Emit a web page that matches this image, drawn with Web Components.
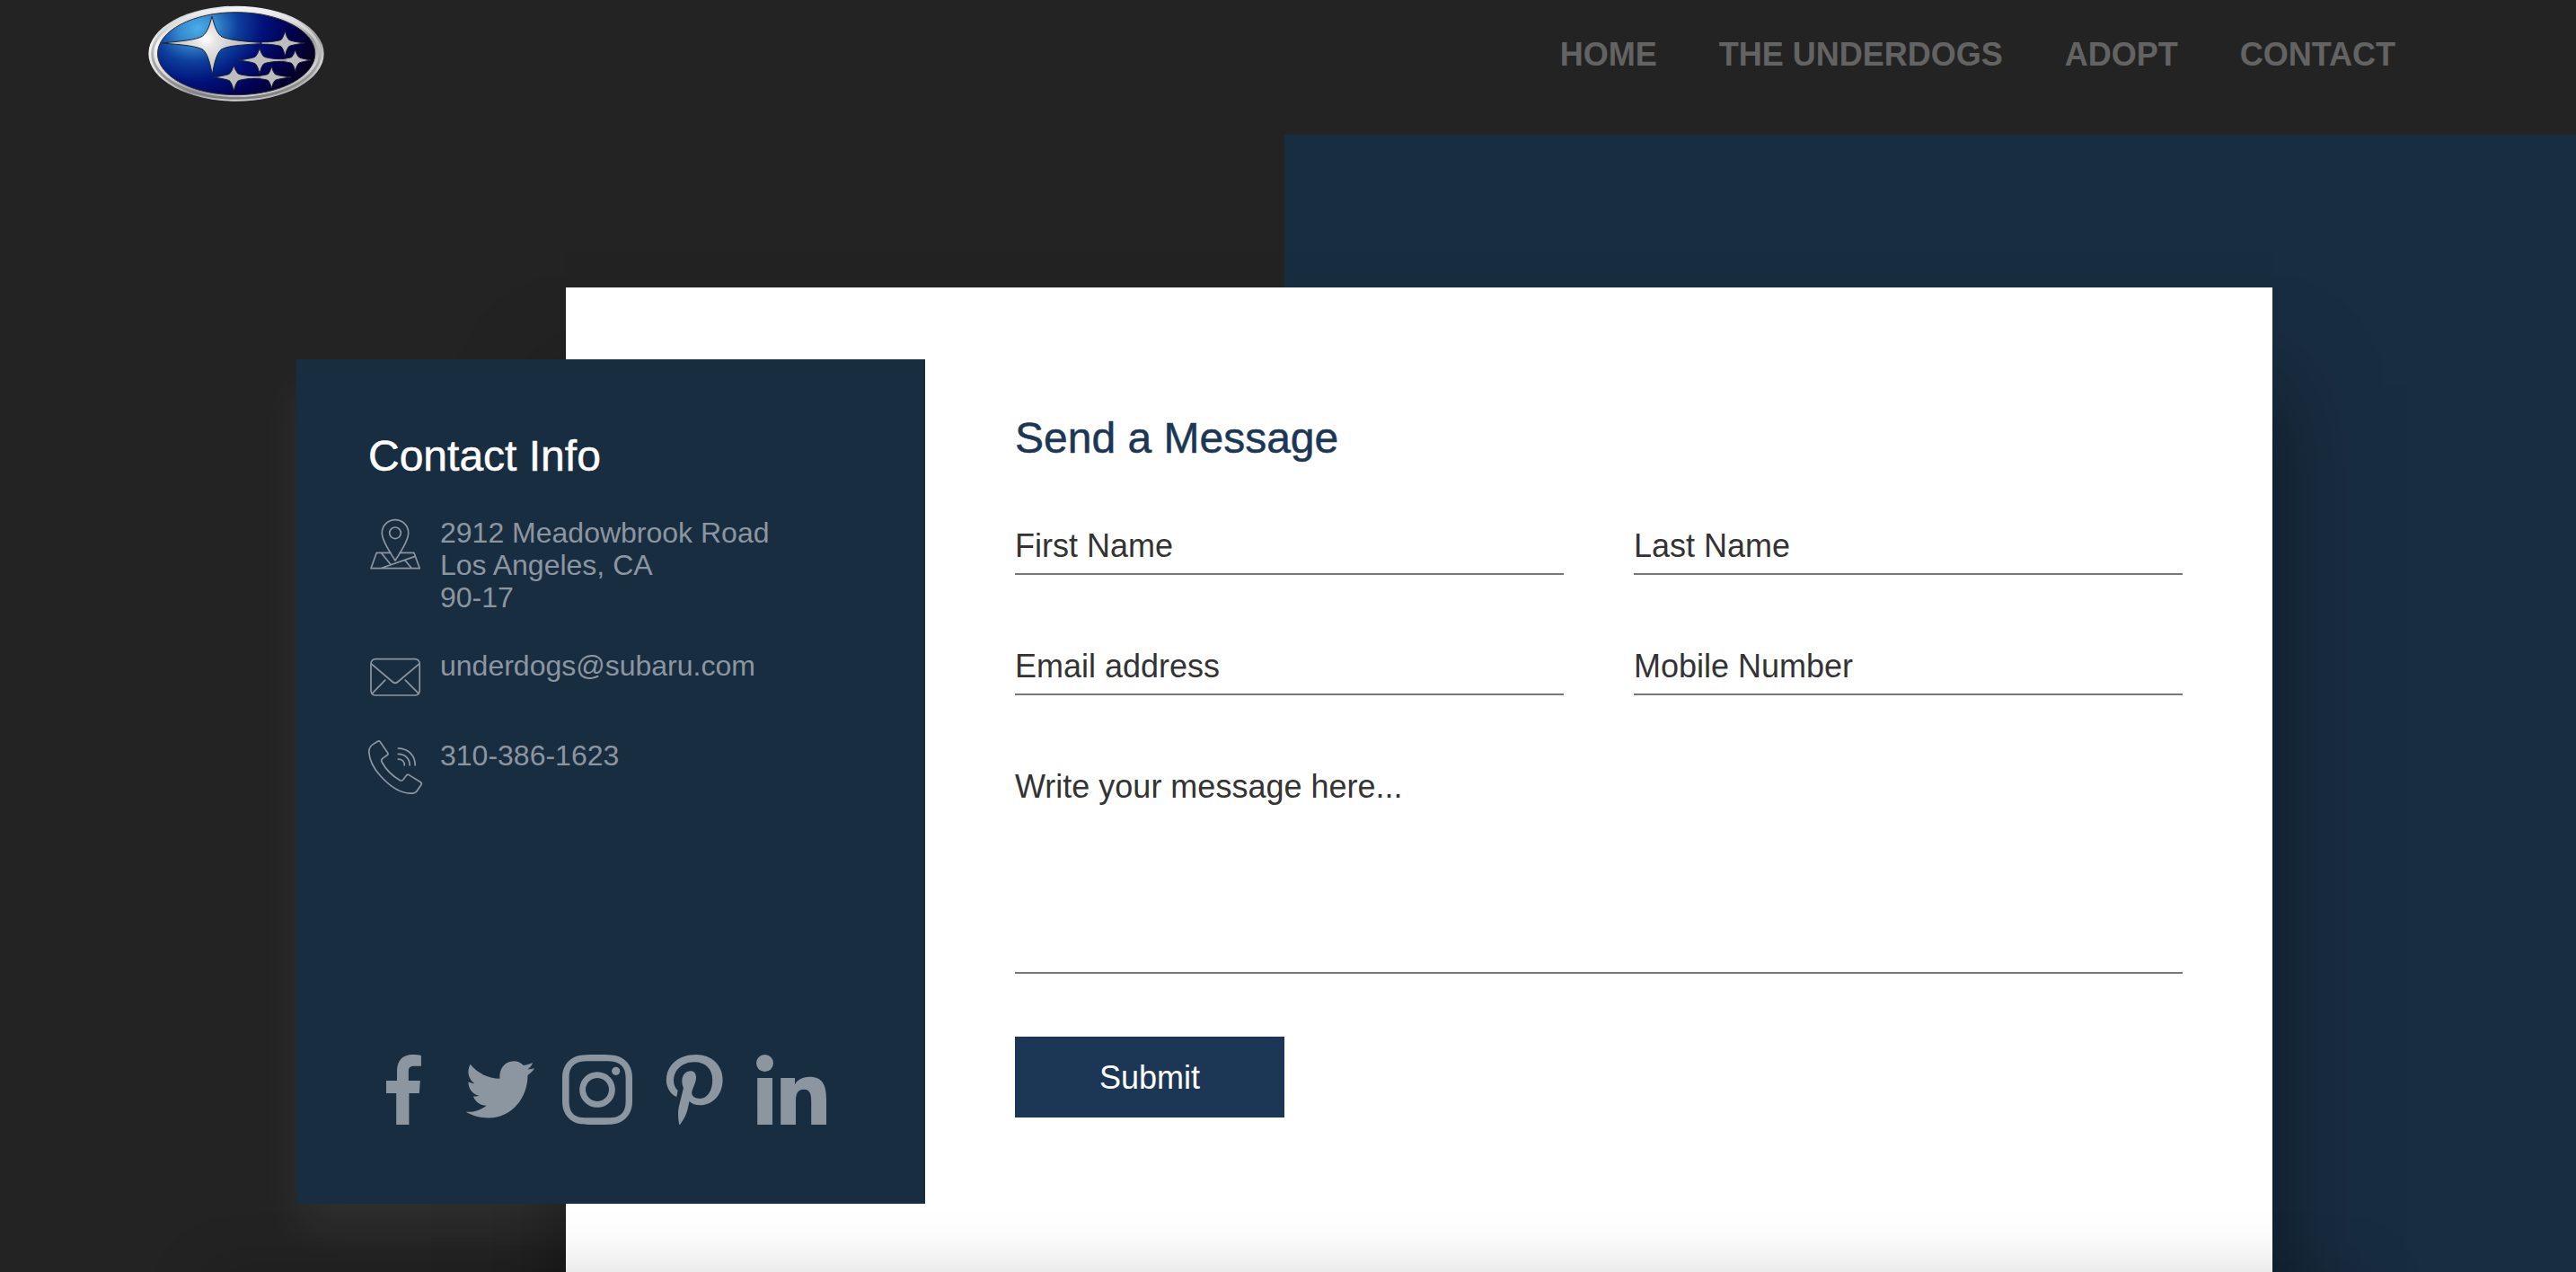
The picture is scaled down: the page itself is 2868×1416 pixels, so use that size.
<!DOCTYPE html>
<html lang="en">
<head>
<meta charset="utf-8">
<title>Contact</title>
<style>
  html, body { margin: 0; height: 100%; overflow: hidden; background: #232323; }
  body { font-family: "Liberation Sans", Arial, Helvetica, sans-serif; }
</style>
</head>
<body>
<contact-page></contact-page>
<script>
const define = (name, html) => customElements.define(name, class extends HTMLElement {
  constructor() {
    super();
    const t = document.createElement('template');
    t.innerHTML = html;
    this.attachShadow({ mode: 'open' }).append(t.content.cloneNode(true));
  }
});

const ICONS = {
  pin: '<path d="M30 49C25.5 41.5 15.3 28 15.3 18.3a14.7 14.7 0 0 1 29.4 0C44.7 28 34.5 41.5 30 49Z"/><circle cx="30" cy="18.3" r="6.3"/><path d="M24.9 40.3H9.3L3 57.7H57.3L50.9 40.3H35.1M14.3 40.3L25 53.5M15 57.3L52.2 44.4M40.7 48.5L48 57.3"/>',
  mail: '<rect x="3" y="10.6" width="54.2" height="40.4" rx="5"/><path d="M3.6 16.2L27 36Q30 38.6 33 36L56.6 16.2M18.8 34.2L4.2 49.2M41.3 34.2L56.2 49.2"/>',
  phone: '<path d="M10.6 2.2L5.6 5.4C2.4 7.4.6 10.4.8 14.6C1.5 24 6.4 32.8 13.6 40.8C22.5 50.6 34.5 60 46.7 60.200C50 60.300 52.8 59.8 54.4 57.2L59 50.4Q59.9 48.8 58.3 47.7L45.3 39.6Q43.6 38.7 42.4 40.2L39 44.8Q37.5 46.6 35.4 45.7C27.2 41 19 32.6 15 25Q14 22.9 15.9 21.4L21.2 17.5Q22.6 16.6 21.6 15L13.2 2.8Q12.2 1.3 10.6 2.2Z"/><path d="M33.3 10.1C44.5 10.1 52.2 18 52.2 28.8M33.3 16.3C41 16.3 46.2 21.4 46.2 28.8M33.3 22.1C37.6 22.1 40.3 24.8 40.3 28.8"/>',
  facebook: '<path d="M31.2 78V43H20V29H32V18.5C32 6 39 0 49 0C53 0 56.5 .3 58.9 .9V12.7H51C46.2 12.7 44.8 14.8 44.8 19V29H57.8L56.8 43H45.4V78Z"/>',
  twitter: '<path d="M5.6 10.7C13 20 25 26.5 38.4 26.7C37.5 16 44 7.3 54.1 7.3C58.5 7.3 62 9 64.8 12C68.5 11.5 72 10.3 75.2 9C74 12.3 72 14.8 69.3 16.5C72 16.4 74.6 15.9 77.2 15.3C75 18.3 72.5 21 69.5 23C69.5 48 52 70.4 26 70.4C16.5 70.4 8 68 .6 63.7C9 64.5 17 62 23.5 56.7C16.5 56.5 11 52.5 8.9 46.2C11 46.6 13 46.6 15.5 46C8 44.3 3.4 38 3.4 30.3C5.5 31.4 7.8 32.1 10.4 32.2C3 27 1.6 18 5.6 10.7Z"/>',
  instagram: '<path fill-rule="evenodd" d="M39 0C52 0 59 0 65 3C73 7 78 14.5 78 26V52C78 63 73 71 65 75C59 78 52 78 39 78C26 78 19 78 13 75C5 71 0 63 0 52V26C0 14.5 5 7 13 3C19 0 26 0 39 0ZM39 7.3C25 7.3 20 7.3 16 9.4C10.500 12 7.600 17 7.600 26V52C7.600 61 10.500 66 16 68.600C20 70.700 25 70.300 39 70.300C53 70.300 58 70.700 62 68.600C67.500 66 70.600 61 70.600 52V26C70.600 17 67.500 12 62 9.400C58 7.300 53 7.300 39 7.300Z"/><path fill-rule="evenodd" d="M39 19.200a19.800 19.800 0 1 0 .01 0ZM39 26a13 13 0 1 1-.01 0Z"/><circle cx="59.700" cy="18.300" r="4.600"/>',
  pinterest: '<path d="M20.6 40C17.7 37.3 16 33.3 16 28.700C16 17 26 8.300 39.200 8.300C51.500 8.300 59.200 16 59.200 28.300C59.200 40.500 53.300 49 45.300 49C39.500 49 35.500 46 36.300 41.500C37.500 36 41 31 41 25.500C41 21 38.700 18.300 34.900 18.300C29.500 18.300 25.300 22.500 25.300 29C25.300 32 25.800 34.600 27 37L21.800 58C20.500 64 20.800 71 22.200 78H23C27.500 71.500 29.800 67.500 31.500 61L33.500 52C36 54.800 40.500 56.300 45.300 56.300C60 56.300 70.600 44 70.600 28C70.600 11.500 58 0 41 0C20 0 7.800 13 7.800 28.300C7.800 36 12 44 18.800 47C19.400 47 19.600 46 19.700 45.300Z"/>',
  linkedin: '<circle cx="9.5" cy="9.500" r="9.500"/><path d="M1.200 26H18V78H1.200ZM27.200 26H43V33.200C45.500 28.500 51 24.800 59 24.800C74.500 24.800 78 35 78 49.500V78H61.200V52.500C61.200 45 60.500 38.700 52.800 38.700C45 38.700 44 45.500 44 52.300V78H27.200Z"/>'
};

customElements.define('line-icon', class extends HTMLElement {
  constructor() {
    super();
    this.attachShadow({ mode: 'open' }).innerHTML = `
      <style>:host{display:block;flex:none;width:60px;height:60px}svg{display:block;overflow:visible}</style>
      <svg width="60" height="60" viewBox="0 0 60 60" fill="none" stroke="#8c96a0" stroke-width="1.7" stroke-linecap="round" stroke-linejoin="round">${ICONS[this.getAttribute('name')] || ''}</svg>`;
  }
});

customElements.define('social-icon', class extends HTMLElement {
  constructor() {
    super();
    this.attachShadow({ mode: 'open' }).innerHTML = `
      <style>:host{display:block;width:78px;height:78px}svg{display:block}</style>
      <svg width="78" height="78" viewBox="0 0 78 78" fill="#8c96a0">${ICONS[this.getAttribute('name')] || ''}</svg>`;
  }
});

// four-pointed star with arms l, r (horizontal) and u, d (vertical)
const star = (x, y, l, r, u, d, k) =>
  `M${x - l} ${y}Q${x - k * 1.3} ${y - k * .55} ${x - k} ${y - k}Q${x - k * .45} ${y - k * 1.6} ${x} ${y - u}Q${x + k * .45} ${y - k * 1.6} ${x + k} ${y - k}Q${x + k * 1.3} ${y - k * .55} ${x + r} ${y}Q${x + k * 1.3} ${y + k * .55} ${x + k} ${y + k}Q${x + k * .45} ${y + k * 1.6} ${x} ${y + d}Q${x - k * .45} ${y + k * 1.6} ${x - k} ${y + k}Q${x - k * 1.3} ${y + k * .55} ${x - l} ${y}Z`;

define('brand-logo', `
  <style>:host{display:block;width:196px;height:107px}svg{display:block}</style>
  <svg width="196" height="107" viewBox="75 19 588 321">
    <defs>
      <linearGradient id="rim" x1=".1" y1="0" x2=".9" y2="1">
        <stop offset="0" stop-color="#b9b9b9"/><stop offset=".22" stop-color="#f4f4f4"/><stop offset=".45" stop-color="#d8d8d8"/>
        <stop offset=".62" stop-color="#9a9a9a"/><stop offset=".8" stop-color="#d5d5d5"/><stop offset="1" stop-color="#808080"/>
      </linearGradient>
      <linearGradient id="rim2" x1="0" y1="0" x2="0" y2="1">
        <stop offset="0" stop-color="#f2f2f2"/><stop offset=".5" stop-color="#b4b4b4"/><stop offset="1" stop-color="#7d7d7d"/>
      </linearGradient>
      <radialGradient id="blue" gradientUnits="userSpaceOnUse" cx="240" cy="95" r="430" gradientTransform="rotate(-14 240 95) translate(0 19) scale(1 .8)">
        <stop offset="0" stop-color="#49aee8"/><stop offset=".15" stop-color="#3488cf"/><stop offset=".32" stop-color="#0d3f9c"/>
        <stop offset=".52" stop-color="#00117a"/><stop offset=".75" stop-color="#020050"/><stop offset="1" stop-color="#07001c"/>
      </radialGradient>
      <radialGradient id="shine" gradientUnits="userSpaceOnUse" cx="268" cy="130" r="110">
        <stop offset="0" stop-color="#fff"/><stop offset=".3" stop-color="#e6e6e6"/><stop offset="1" stop-color="#c3c3c3"/>
      </radialGradient>
    </defs>
    <ellipse cx="369" cy="180" rx="293" ry="159" fill="url(#rim)"/>
    <ellipse cx="369" cy="180" rx="280" ry="149" fill="none" stroke="url(#rim2)" stroke-width="9"/>
    <ellipse cx="369.500" cy="180" rx="263" ry="138" fill="url(#blue)" stroke="#2c2c36" stroke-width="3"/>
    <g stroke="#1c2030" stroke-width="3" stroke-linejoin="round" fill="#bdbdbd">
      <path d="${star(532, 145, 92, 66, 40, 43, 12)}"/>
      <path d="${star(566, 202, 84, 53, 34, 36, 11)}"/>
      <path d="${star(447, 202, 70, 90, 40, 44, 13)}"/>
      <path d="${star(487, 259, 90, 65, 36, 36, 11)}"/>
      <path d="${star(361, 259, 69, 90, 39, 45, 13)}"/>
      <path fill="url(#shine)" d="M122 145C190 138 235 134 256 122C274 108 281 82 288 56C295 82 302 108 318 122C340 134 385 139 478 145C385 151 340 153 318 167C302 182 295 216 289 250C282 216 275 182 258 167C236 154 190 151 122 145Z"/>
    </g>
    <path d="M455 142.500H500V147.500H455ZM500 199.500H545V204.500H500ZM415 256.500H460V261.500H415Z" fill="#bdbdbd"/>
  </svg>`);

define('nav-link', `
  <style>:host{display:block;font-weight:700;font-size:36px;line-height:40px;color:#636363;white-space:nowrap}</style><slot></slot>`);

define('site-header', `
  <style>
    :host{display:flex;justify-content:space-between;align-items:flex-start;height:150px;padding:0 201px 0 165px;box-sizing:border-box}
    brand-logo{margin-top:6px}
    nav{display:flex;gap:69px;margin-top:41px}
  </style>
  <brand-logo></brand-logo>
  <nav><nav-link>HOME</nav-link><nav-link>THE UNDERDOGS</nav-link><nav-link>ADOPT</nav-link><nav-link>CONTACT</nav-link></nav>`);

define('info-row', `
  <style>
    :host{display:flex;gap:20px;min-height:60px;font-size:32px;line-height:36px;color:#8c96a0}
    p{margin:0}
  </style>
  <slot name="icon"></slot><p><slot></slot></p>`);

define('contact-card', `
  <style>
    :host{display:flex;flex-direction:column;justify-content:space-between;box-sizing:border-box;height:940px;padding:81px 80px 88px;
      background:#192d41;box-shadow:0 30px 50px rgba(255,255,255,.06)}
    h2{margin:0 0 40px;font-weight:400;font-size:48px;line-height:54px;color:#fff;-webkit-text-stroke:.5px #fff}
    .rows{display:flex;flex-direction:column;gap:40px}
    .social{display:flex;gap:30px}
  </style>
  <section>
    <h2>Contact Info</h2>
    <div class="rows">
      <info-row><line-icon slot="icon" name="pin"></line-icon>2912 Meadowbrook Road<br>Los Angeles, CA<br>90-17</info-row>
      <info-row><line-icon slot="icon" name="mail"></line-icon>underdogs@subaru.com</info-row>
      <info-row><line-icon slot="icon" name="phone"></line-icon>310-386-1623</info-row>
    </div>
  </section>
  <div class="social">
    <social-icon name="facebook"></social-icon><social-icon name="twitter"></social-icon><social-icon name="instagram"></social-icon><social-icon name="pinterest"></social-icon><social-icon name="linkedin"></social-icon>
  </div>`);

define('form-field', `
  <style>
    :host{display:block;box-sizing:border-box;height:52px;border-bottom:2px solid #777;font-size:36px;line-height:40px;color:#333}
    :host([multiline]){height:228px;grid-column:1/-1}
  </style><slot></slot>`);

define('submit-button', `
  <style>
    :host{display:block}
    button{display:block;box-sizing:border-box;width:300px;height:90px;padding:2px 0 0;border:0;background:#1b3755;color:#fff;font:400 36px/40px "Liberation Sans",Arial,sans-serif}
  </style><button type="button"><slot></slot></button>`);

define('message-form', `
  <style>
    :host{display:block;box-sizing:border-box;height:1240px;padding:141px 100px 0 500px;background:#fff;box-shadow:0 110px 100px rgba(0,0,0,.5)}
    h2{margin:0 0 73px;font-weight:400;font-size:48px;line-height:54px;color:#1b3755;-webkit-text-stroke:.5px #1b3755}
    .fields{display:grid;grid-template-columns:611px 611px;justify-content:space-between;row-gap:82px;margin-bottom:70px}
  </style>
  <h2>Send a Message</h2>
  <div class="fields">
    <form-field>First Name</form-field><form-field>Last Name</form-field>
    <form-field>Email address</form-field><form-field>Mobile Number</form-field>
    <form-field multiline>Write your message here...</form-field>
  </div>
  <submit-button>Submit</submit-button>`);

define('contact-page', `
  <style>
    :host{display:flex;flex-direction:column;position:relative;width:2868px;height:1416px;overflow:hidden;background:#232323}
    main{flex:1;min-height:0;box-sizing:border-box;display:grid;grid-template-columns:300px 400px 1500px;align-items:start;
      padding:170px 0 0 330px;background:linear-gradient(90deg,#232323 1430px,#192d41 1430px)}
    message-form{grid-area:1/2/2/4}
    contact-card{grid-area:1/1/2/3;margin-top:80px;z-index:1}
    .fade{position:absolute;z-index:2;left:230px;right:230px;top:100%;height:100px;box-shadow:0 0 70px rgba(0,0,0,.16)}
  </style>
  <site-header></site-header>
  <main><message-form></message-form><contact-card></contact-card></main>
  <div class="fade"></div>`);
</script>
</body>
</html>
